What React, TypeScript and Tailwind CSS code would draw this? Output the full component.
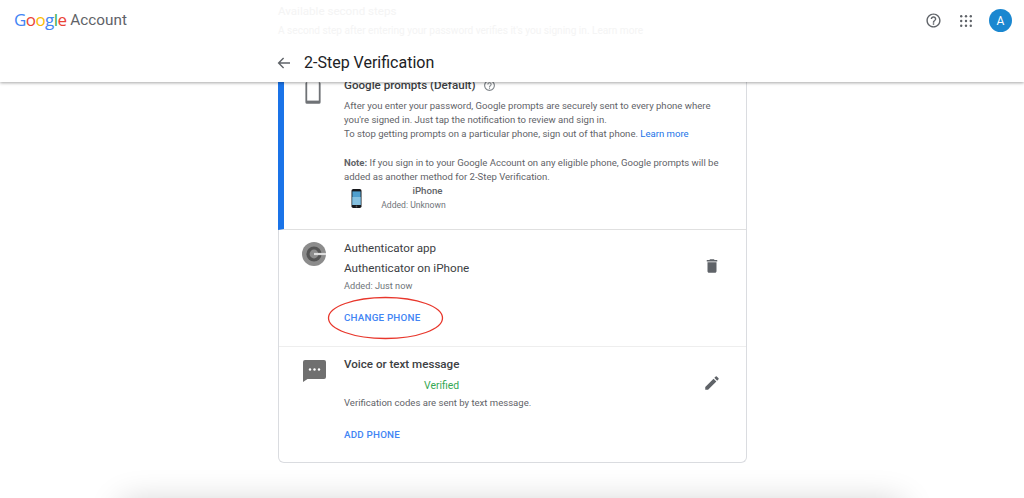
import React from "react";

const body = "text-[9.55px] leading-[14.2px] text-[#5f6368]";
const title = "text-[11.6px] leading-[16px] font-medium text-[#3c4043]";
const link = "text-[9.8px] leading-[14px] font-medium tracking-[0.2px] text-[#4285f4]";

function PhoneOutline() {
  return (
    <svg width="16" height="22" viewBox="0 0 16 22" className="block">
      <path d="M2 0h12a1.6 1.6 0 0 1 1.6 1.6v18.6a1.6 1.6 0 0 1-1.6 1.6H2a1.6 1.6 0 0 1-1.6-1.6V1.6A1.6 1.6 0 0 1 2 0z" fill="#6f7276" />
      <rect x="2.2" y="0" width="11.6" height="18.6" fill="#fff" />
    </svg>
  );
}

function IPhoneIcon() {
  return (
    <svg width="11" height="19" viewBox="0 0 11 19" className="block">
      <rect x="0.5" y="0" width="10" height="19" rx="1.8" fill="#16181c" />
      <rect x="1.4" y="2.4" width="8.2" height="13.6" fill="#4f9fce" />
      <rect x="1.4" y="8" width="8.2" height="8" fill="#86c1e0" />
      <circle cx="5.5" cy="17.5" r="0.9" fill="#555" />
    </svg>
  );
}

function AuthIcon() {
  return (
    <svg width="24" height="24" viewBox="0 0 24 24" className="block">
      <circle cx="12" cy="12" r="12" fill="#8c8c8c" />
      <circle cx="12" cy="12" r="7.6" fill="#555555" />
      <circle cx="12" cy="12" r="4.4" fill="#8c8c8c" />
      <path d="M12 10.9h12v2.2H12z" fill="#dedede" />
    </svg>
  );
}

function ChatIcon() {
  return (
    <svg width="23" height="22" viewBox="0 0 23 22" className="block">
      <path d="M2 0h19a2 2 0 0 1 2 2v15a2 2 0 0 1-2 2H4.5L0 22V2a2 2 0 0 1 2-2z" fill="#6f6f6f" />
      <circle cx="7" cy="9.5" r="1.2" fill="#fff" />
      <circle cx="11.5" cy="9.5" r="1.2" fill="#fff" />
      <circle cx="16" cy="9.5" r="1.2" fill="#fff" />
    </svg>
  );
}

function TrashIcon() {
  return (
    <svg width="18" height="18" viewBox="0 0 24 24" className="block">
      <path d="M6 19c0 1.1.9 2 2 2h8c1.1 0 2-.9 2-2V7H6v12zM19 4h-3.5l-1-1h-5l-1 1H5v2h14V4z" fill="#5f6368" />
    </svg>
  );
}

function PencilIcon() {
  return (
    <svg width="18" height="18" viewBox="0 0 24 24" className="block">
      <path d="M3 17.25V21h3.75L17.81 9.94l-3.75-3.75L3 17.25zM20.71 7.04a1 1 0 0 0 0-1.41l-2.34-2.34a1 1 0 0 0-1.41 0l-1.83 1.83 3.75 3.75 1.83-1.83z" fill="#5f6368" />
    </svg>
  );
}

function HelpIcon({ size, color }: { size: number; color: string }) {
  return (
    <svg width={size} height={size} viewBox="0 0 24 24" className="block">
      <path
        d="M11 18h2v-2h-2v2zm1-16C6.48 2 2 6.48 2 12s4.48 10 10 10 10-4.48 10-10S17.52 2 12 2zm0 18c-4.41 0-8-3.59-8-8s3.59-8 8-8 8 3.59 8 8-3.59 8-8 8zm0-14c-2.21 0-4 1.79-4 4h2c0-1.1.9-2 2-2s2 .9 2 2c0 2-3 1.75-3 5h2c0-2.25 3-2.5 3-5 0-2.21-1.79-4-4-4z"
        fill={color}
      />
    </svg>
  );
}

function AppsIcon() {
  return (
    <svg width="12" height="12" viewBox="0 0 12 12" className="block" fill="#5f6368">
      {[1.2, 6, 10.8].map((y) =>
        [1.2, 6, 10.8].map((x) => <circle key={`${x}-${y}`} cx={x} cy={y} r="1.2" />)
      )}
    </svg>
  );
}

function ArrowIcon() {
  return (
    <svg width="14" height="14" viewBox="0 0 14 14" className="block">
      <path d="M13 7H2M6.6 2 1.6 7l5 5" fill="none" stroke="#5f6368" strokeWidth="1.4" />
    </svg>
  );
}

export default function App() {
  return (
    <div
      className="relative h-[498px] w-[1024px] overflow-hidden bg-white"
      style={{ fontFamily: "Roboto, 'Liberation Sans', sans-serif" }}
    >
      {/* Header */}
      <header className="relative z-10 flex h-[82px] flex-col bg-white shadow-[0_1px_3px_rgba(0,0,0,0.35)]">
        <div className="flex h-[41px] items-center pr-[12px] pl-[14px]">
          <div className="-mt-[2px] flex w-[264px] items-center">
            <span
              className="text-[17px] leading-[24px] tracking-[-0.6px]"
              style={{ fontFamily: "'Open Sans', sans-serif" }}
            >
              <span className="text-[#4285f4]">G</span>
              <span className="text-[#ea4335]">o</span>
              <span className="text-[#fbbc05]">o</span>
              <span className="text-[#4285f4]">g</span>
              <span className="text-[#34a853]">l</span>
              <span className="text-[#ea4335]">e</span>
            </span>
            <span className="ml-[4px] text-[15.3px] leading-[24px] text-[#5f6368]">Account</span>
          </div>
          <div className="flex-1 text-[#f4f4f4]">
            <div className="text-[11.6px] leading-[14px]">Available second steps</div>
            <div className="mt-[7px] text-[10.1px] leading-[12px]">
              A second step after entering your password verifies it's you signing in. Learn more
            </div>
          </div>
          <div className="flex items-center">
            <div className="mr-[1px]">
              <HelpIcon size={17} color="#5f6368" />
            </div>
            <div className="ml-[17px]">
              <AppsIcon />
            </div>
            <div className="ml-[17px] flex h-[23px] w-[23px] items-center justify-center rounded-full bg-[#1a87d0] text-[12px] text-white">
              A
            </div>
          </div>
        </div>
        <div className="flex h-[41px] items-center pt-[2px] pl-[277px]">
          <ArrowIcon />
          <h1 className="ml-[13px] text-[16px] leading-[24px] font-normal text-[#202124]">
            2-Step Verification
          </h1>
        </div>
      </header>

      {/* Card */}
      <main className="mx-auto ml-[278px] h-[381px] w-[469px] rounded-b-[6px] border-x border-b border-[#dadce0] bg-white">
        {/* Prompts */}
        <section className="-ml-px flex h-[148px] border-b border-[#e0e0e0] border-l-[6px] border-l-[#1a73e8]">
          <div className="w-[21px]" />
          <div className="w-[39px]">
            <PhoneOutline />
          </div>
          <div className="flex-1">
            <div className="-mt-[5px] flex items-center">
              <span className={title}>Google prompts (Default)</span>
              <span className="ml-[7px]">
                <HelpIcon size={13} color="#80868b" />
              </span>
            </div>
            <div className="mt-[6px] w-[380px] whitespace-nowrap">
              <p className={body}>After you enter your password, Google prompts are securely sent to every phone where</p>
              <p className={body}>you're signed in. Just tap the notification to review and sign in.</p>
              <p className={body}>
                To stop getting prompts on a particular phone, sign out of that phone.{" "}
                <span className="text-[#1a73e8]">Learn more</span>
              </p>
              <p className={`${body} mt-[14px]`}>
                <span className="font-bold">Note:</span> If you sign in to your Google Account on any eligible phone, Google prompts will be
              </p>
              <p className={body}>added as another method for 2-Step Verification.</p>
            </div>
            <div className="flex items-center pl-[7px]">
              <IPhoneIcon />
              <div className="ml-[18px] flex w-[67px] flex-col items-center">
                <span className="pl-[28px] text-[9.7px] leading-[14px] font-medium text-[#5f6368]">iPhone</span>
                <span className="text-[8.6px] leading-[14px] whitespace-nowrap text-[#70757a]">Added: Unknown</span>
              </div>
            </div>
          </div>
        </section>

        {/* Authenticator */}
        <section className="flex h-[117px] border-b border-[#eeeeee] pt-[10px]">
          <div className="ml-[23px] w-[42px] pt-[2px]">
            <AuthIcon />
          </div>
          <div className="relative flex-1">
            <div className={`${title} font-normal`}>Authenticator app</div>
            <div className="mt-[4px] text-[11.7px] leading-[16px] text-[#3c4043]">Authenticator on iPhone</div>
            <div className="mt-[3px] text-[9.2px] leading-[14px] text-[#70757a]">Added: Just now</div>
            <div className={`${link} mt-[18px]`}>CHANGE PHONE</div>
            <svg width="117" height="44" viewBox="0 0 117 44" className="absolute top-[56px] left-[-17px]">
              <ellipse cx="58.5" cy="22" rx="57" ry="20.5" fill="none" stroke="#e8372c" strokeWidth="1.3" />
            </svg>
          </div>
          <div className="mt-[17px] mr-[25px]">
            <TrashIcon />
          </div>
        </section>

        {/* Voice */}
        <section className="flex pt-[9px]">
          <div className="ml-[24px] w-[41px] pt-[4px]">
            <ChatIcon />
          </div>
          <div className="flex-1">
            <div className={title}>Voice or text message</div>
            <div className="mt-[7px] pl-[80px] text-[10.4px] leading-[14px] text-[#34a853]">Verified</div>
            <div className={`${body} mt-[3px]`}>Verification codes are sent by text message.</div>
            <div className={`${link} mt-[18px]`}>ADD PHONE</div>
          </div>
          <div className="mt-[18px] mr-[25px]">
            <PencilIcon />
          </div>
        </section>
      </main>

      {/* Next card peeking in from below */}
      <div className="mt-[40px] ml-[122px] h-[60px] w-[780px] bg-white shadow-[0_0_34px_rgba(0,0,0,0.2)]" />
    </div>
  );
}
